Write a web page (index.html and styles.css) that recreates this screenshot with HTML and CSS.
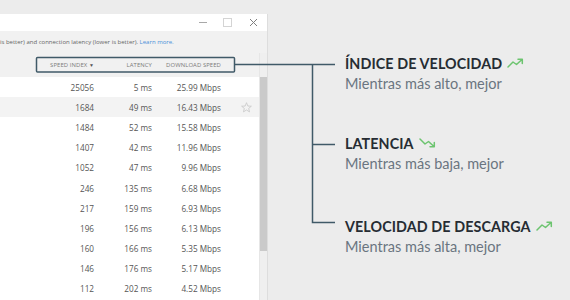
FILE: index.html
```html
<!DOCTYPE html>
<html>
<head>
<meta charset="utf-8">
<link rel="stylesheet" href="styles.css">
</head>
<body>
<div class="page">
  <div class="window">
    <div class="titlebar">
      <span class="ctl ctl-min"></span>
      <span class="ctl ctl-max"></span>
      <span class="ctl ctl-close">
        <svg width="9" height="9" viewBox="0 0 9 9"><path d="M1 1L8 8M8 1L1 8" stroke="#808080" stroke-width="1"/></svg>
      </span>
    </div>
    <div class="infobar">is better) and connection latency (lower is better). <a class="link">Learn more.</a></div>
    <div class="content">
      <div class="table">
        <div class="thead row">
          <span class="c1">SPEED INDEX <span class="caret">▼</span></span>
          <span class="c2">LATENCY</span>
          <span class="c3">DOWNLOAD SPEED</span>
          <span class="c4"></span>
        </div>
        <div class="row"><span class="c1">25056</span><span class="c2">5 ms</span><span class="c3">25.99 Mbps</span><span class="c4"></span></div>
        <div class="row hover"><span class="c1">1684</span><span class="c2">49 ms</span><span class="c3">16.43 Mbps</span><span class="c4">
          <svg width="11" height="11" viewBox="0 0 12 12"><path d="M6 0.8L7.5 4.4L11.3 4.6L8.4 7L9.3 10.8L6 8.7L2.7 10.8L3.6 7L0.7 4.6L4.5 4.4Z" fill="none" stroke="#c8c8c8" stroke-width="0.9" stroke-linejoin="round"/></svg>
        </span></div>
        <div class="row"><span class="c1">1484</span><span class="c2">52 ms</span><span class="c3">15.58 Mbps</span><span class="c4"></span></div>
        <div class="row"><span class="c1">1407</span><span class="c2">42 ms</span><span class="c3">11.96 Mbps</span><span class="c4"></span></div>
        <div class="row"><span class="c1">1052</span><span class="c2">47 ms</span><span class="c3">9.96 Mbps</span><span class="c4"></span></div>
        <div class="row"><span class="c1">246</span><span class="c2">135 ms</span><span class="c3">6.68 Mbps</span><span class="c4"></span></div>
        <div class="row"><span class="c1">217</span><span class="c2">159 ms</span><span class="c3">6.93 Mbps</span><span class="c4"></span></div>
        <div class="row"><span class="c1">196</span><span class="c2">156 ms</span><span class="c3">6.13 Mbps</span><span class="c4"></span></div>
        <div class="row"><span class="c1">160</span><span class="c2">166 ms</span><span class="c3">5.35 Mbps</span><span class="c4"></span></div>
        <div class="row"><span class="c1">146</span><span class="c2">176 ms</span><span class="c3">5.17 Mbps</span><span class="c4"></span></div>
        <div class="row"><span class="c1">112</span><span class="c2">202 ms</span><span class="c3">4.52 Mbps</span><span class="c4"></span></div>
      </div>
      <div class="scrollbar"><div class="thumb"></div></div>
    </div>
  </div>

  <div class="notes">
    <div class="note">
      <div class="note-title">ÍNDICE DE VELOCIDAD
        <svg class="trend" width="17" height="10" viewBox="0 0 17 10"><path d="M1 9L6 4L9.5 6.5L15 1.5M11 1.2H15.3V5.5" fill="none" stroke="#6cc46f" stroke-width="1.5" stroke-linejoin="round" stroke-linecap="round"/></svg>
      </div>
      <div class="note-sub">Mientras más alto, mejor</div>
    </div>
    <div class="note">
      <div class="note-title">LATENCIA
        <svg class="trend" width="17" height="10" viewBox="0 0 17 10"><path d="M1 1L6 6L9.5 3.5L15 8.5M11 8.8H15.3V4.5" fill="none" stroke="#6cc46f" stroke-width="1.5" stroke-linejoin="round" stroke-linecap="round"/></svg>
      </div>
      <div class="note-sub">Mientras más baja, mejor</div>
    </div>
    <div class="note note-last">
      <div class="note-title">VELOCIDAD DE DESCARGA
        <svg class="trend" width="17" height="10" viewBox="0 0 17 10"><path d="M1 9L6 4L9.5 6.5L15 1.5M11 1.2H15.3V5.5" fill="none" stroke="#6cc46f" stroke-width="1.5" stroke-linejoin="round" stroke-linecap="round"/></svg>
      </div>
      <div class="note-sub">Mientras más alta, mejor</div>
    </div>
  </div>

  <svg class="connectors" width="570" height="300" viewBox="0 0 570 300">
    <rect x="36.5" y="57.5" width="198" height="14.5" rx="1" fill="none" stroke="#405a68" stroke-width="1.5"/>
    <path d="M235 64.5H335M312.5 64.5V222.5H335M312.5 144.5H335" fill="none" stroke="#405a68" stroke-width="1.5"/>
  </svg>
</div>
</body>
</html>
```

FILE: styles.css
```css
html, body {
  margin: 0;
  padding: 0;
}
body {
  background: #ececec;
  width: 570px;
  height: 300px;
  overflow: hidden;
}
.page {
  position: relative;
  display: flex;
  width: 570px;
  height: 300px;
  padding-top: 14px;
  box-sizing: border-box;
}
.window {
  width: 268px;
  height: 300px;
  background: #ffffff;
  border-right: 1px solid #dddddd;
  box-sizing: border-box;
  display: flex;
  flex-direction: column;
  font-family: "Open Sans", "Noto Sans", sans-serif;
  flex-shrink: 0;
}
.titlebar {
  height: 17px;
  display: flex;
  align-items: center;
  justify-content: flex-end;
  padding-right: 1px;
}
.ctl {
  width: 25px;
  height: 17px;
  display: flex;
  align-items: center;
  justify-content: center;
}
.ctl-min::before {
  content: "";
  width: 8px;
  height: 1px;
  background: #a8a8a8;
}
.ctl-max::before {
  content: "";
  width: 7px;
  height: 7px;
  border: 1px solid #d4d4d4;
}
.ctl-close {
  width: 26px;
}
.infobar {
  height: 22px;
  background: #f1f1f1;
  font-size: 6px;
  color: #666;
  line-height: 22px;
  white-space: nowrap;
  overflow: hidden;
}
.link {
  color: #4a90d9;
}
.content {
  display: flex;
  flex: 1;
  min-height: 0;
}
.table {
  width: 259px;
  display: flex;
  flex-direction: column;
}
.row {
  display: grid;
  grid-template-columns: 94px 58px 69px 38px;
  height: 20.2px;
  align-items: center;
  font-size: 8.2px;
  color: #555;
  flex-shrink: 0;
}
.row > span {
  text-align: right;
  white-space: nowrap;
}
.row .c4 {
  display: flex;
  justify-content: flex-end;
  padding-right: 7px;
}
.thead {
  height: 24px;
  background: #f1f1f1;
  font-size: 5.9px;
  color: #7a7a7a;
  letter-spacing: 0.1px;
}
.caret {
  font-size: 5px;
  color: #555;
}
.hover {
  background: #f3f3f3;
}
.scrollbar {
  width: 9px;
  background: #efefef;
  border-left: 1px solid #e6e6e6;
  box-sizing: border-box;
  display: flex;
  flex-direction: column;
  padding-top: 24px;
}
.thumb {
  height: 174px;
  background: #cacaca;
}
.notes {
  display: flex;
  flex-direction: column;
  gap: 40px;
  padding-left: 77px;
  padding-top: 40px;
  font-family: "Lato", "Open Sans", sans-serif;
}
.note-last {
  margin-top: 3px;
}
.note-title {
  font-weight: 700;
  font-size: 14.3px;
  line-height: 20px;
  color: #262c33;
  white-space: nowrap;
  display: flex;
  align-items: center;
  gap: 5px;
  letter-spacing: 0.1px;
}
.note-sub {
  font-size: 14.5px;
  line-height: 20px;
  color: #6a7580;
  white-space: nowrap;
}
.trend {
  margin-top: -3px;
}
.connectors {
  position: absolute;
  left: 0;
  top: 0;
  pointer-events: none;
}
```
